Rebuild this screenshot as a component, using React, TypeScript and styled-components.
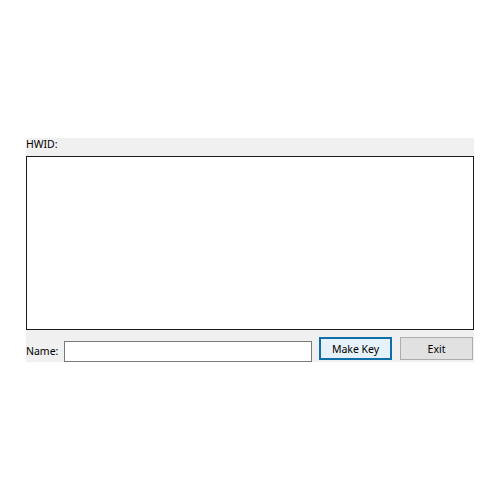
import React from 'react'
import { styled, createGlobalStyle } from 'styled-components'

const Global = createGlobalStyle`
  html, body {
    margin: 0;
    background: #ffffff;
  }
  body {
    font-family: "Noto Sans", "DejaVu Sans", sans-serif;
  }
`

function App() {
  return (
    <>
      <Global />
      <Page>
        <Form>
          <Label>HWID:</Label>
          <HwidBox />
          <BottomRow>
            <Label>Name:</Label>
            <NameInput />
            <Button $primary>Make Key</Button>
            <Button>Exit</Button>
          </BottomRow>
        </Form>
      </Page>
    </>
  )
}

const Page = styled.div`
  padding: 138px 0 0 26px;
`

const Form = styled.div`
  width: 448px;
  background: #f0f0f0;
  display: flex;
  flex-direction: column;
  padding-bottom: 2px;
`

const Label = styled.div`
  font-size: 10.5px;
  line-height: 13px;
  color: #000;
  height: 18px;
  display: flex;
  align-items: flex-start;
  padding-top: 0;
  box-sizing: border-box;
`

const HwidBox = styled.div`
  height: 174px;
  background: #fff;
  border: 1px solid #1a1a1a;
  box-sizing: border-box;
`

const BottomRow = styled.div`
  display: flex;
  align-items: center;
  margin-top: 7px;
  height: 23px;

  & > ${Label} {
    height: auto;
    padding-top: 5px;
    width: 38px;
  }
`

const NameInput = styled.div`
  width: 248px;
  height: 21px;
  margin-top: 5px;
  background: #fff;
  border: 1px solid #7a7a7a;
  box-sizing: border-box;
`

const Button = styled.div<{ $primary?: boolean }>`
  width: 73px;
  height: 23px;
  margin-left: ${({ $primary }) => ($primary ? '7px' : '8px')};
  box-sizing: border-box;
  display: flex;
  align-items: center;
  justify-content: center;
  font-size: 10.5px;
  color: #000;
  background: ${({ $primary }) => ($primary ? '#e5f1fb' : '#e1e1e1')};
  border: ${({ $primary }) => ($primary ? '2px solid #0f6fa8' : '1px solid #adadad')};
`

export default App
